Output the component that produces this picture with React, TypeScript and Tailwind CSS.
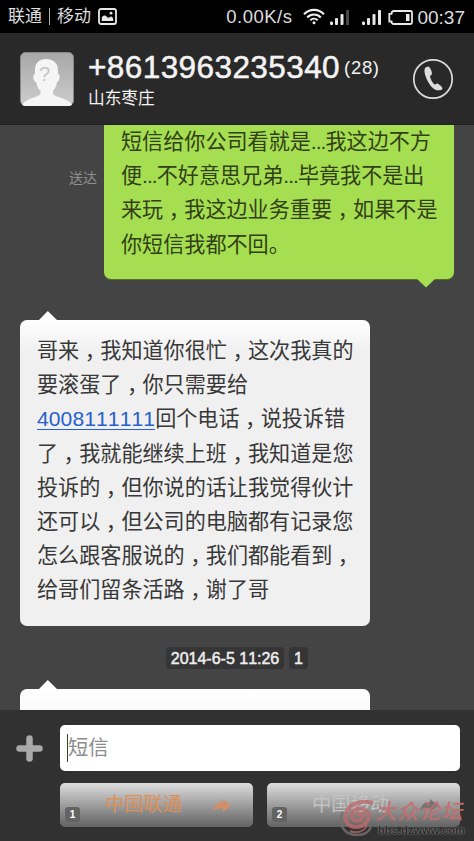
import { Fragment } from 'react';

const received = [
  '哥来，我知道你很忙，这次我真的',
  '要滚蛋了，你只需要给',
  '4008111111回个电话，说投诉错',
  '了，我就能继续上班，我知道是您',
  '投诉的，但你说的话让我觉得伙计',
  '还可以，但公司的电脑都有记录您',
  '怎么跟客服说的，我们都能看到，',
  '给哥们留条活路，谢了哥',
];

const sent = [
  '短信给你公司看就是...我这边不方',
  '便...不好意思兄弟...毕竟我不是出',
  '来玩，我这边业务重要，如果不是',
  '你短信我都不回。',
];

// commas sit in the middle of their cell, dots are set tight, numbers are links
function Line({ text }: { text: string }) {
  return (
    <p className="h-[34.2px] leading-[34.2px] whitespace-nowrap">
      {text.split(/(，|\.\.\.|\d{10})/).map((part, i) => {
        if (part === '，')
          return (
            <span key={i} lang="zh-TW" className="relative top-[7px] font-['Noto_Sans_CJK_TC',sans-serif] leading-none">
              {part}
            </span>
          );
        if (part === '...') return <span key={i} className="tracking-[-1px]">{part}</span>;
        if (/^\d{10}$/.test(part))
          return (
            <a key={i} className="text-[#2660cd] underline decoration-1 underline-offset-[3px] tracking-[0.08px] [font-kerning:none]">
              {part}
            </a>
          );
        return <Fragment key={i}>{part}</Fragment>;
      })}
    </p>
  );
}

function TailUp() {
  return (
    <svg className="absolute -top-[9px] left-[18px]" width="20" height="10" viewBox="0 0 20 10">
      <path d="M0 10 L9.8 0 L20 10Z" fill="#fff" />
    </svg>
  );
}

function StatusBar() {
  return (
    <div className="flex h-[33px] shrink-0 items-center bg-black pl-2 pr-[9px] text-[#dedede]">
      <span className="text-[17px] leading-none">联通</span>
      <span className="mx-[7px] h-[17px] w-px bg-[#b5b5b5]" />
      <span className="text-[17px] leading-none">移动</span>
      <svg className="ml-[7px]" width="19" height="17" viewBox="0 0 19 17">
        <rect x="1" y="1" width="17" height="15" rx="2" fill="none" stroke="#e8e8e8" strokeWidth="1.8" />
        <path d="M3.8 13V9.5C5.5 7 7.5 7 9 9C10.5 11 12 8.5 13 8.5C14.2 8.5 15.2 10 15.2 11V13Z" fill="#e8e8e8" />
        <circle cx="13" cy="5.2" r="1.4" fill="#e8e8e8" />
      </svg>
      <span className="mt-px ml-auto text-[18.5px] leading-none tracking-[0.5px]">0.00K/s</span>
      <svg className="ml-[11px]" width="22" height="17" viewBox="0 0 22 17" fill="none" stroke="#eee" strokeWidth="2.1">
        <path d="M1 6.2C6.5.4 15.5.4 21 6.2" />
        <path d="M4.2 9.4C8 5.5 14 5.5 17.8 9.4" />
        <path d="M7.4 12.2C9.5 10.2 12.5 10.2 14.6 12.2" />
        <circle cx="11" cy="14.8" r="1.5" fill="#eee" stroke="none" />
      </svg>
      <svg className="mt-px ml-[5px]" width="19" height="16" viewBox="0 0 19 16" fill="#e8e8e8">
        <rect y="12.5" width="3" height="3.5" rx="1" />
        <rect x="5" y="9" width="3" height="7" rx="1" />
        <rect x="10.5" y="5" width="3" height="11" rx="1" />
        <rect x="16" y="1" width="3" height="15" fill="#484848" />
      </svg>
      <svg className="mt-px ml-[13px]" width="19" height="16" viewBox="0 0 19 16" fill="#e8e8e8">
        <rect y="12.5" width="3" height="3.5" rx="1" />
        <rect x="5" y="9" width="3" height="7" rx="1" />
        <rect x="10.5" y="5" width="3" height="11" rx="1" />
        <rect x="16" y="1" width="3" height="15" rx="1" />
      </svg>
      <svg className="mt-[2px] ml-[7px]" width="25" height="15" viewBox="0 0 25 15">
        <path d="M6 1H22.5Q24 1 24 2.5V12.5Q24 14 22.5 14H6Q3.5 14 3.5 11.5H1.3V3.8H3.5Q3.5 1 6 1Z" fill="none" stroke="#e8e8e8" strokeWidth="1.8" />
        <rect x="18" y="4" width="3.5" height="7" fill="#e8e8e8" />
      </svg>
      <span className="mt-[2px] ml-[4px] text-[19px] leading-none">00:37</span>
    </div>
  );
}

function Header() {
  return (
    <header className="flex h-[92px] shrink-0 items-start border-b border-[#202020] bg-[#292929] pl-5 pr-[20px]">
      <svg className="mt-[19px]" width="54" height="54" viewBox="0 0 54 54">
        <defs>
          <linearGradient id="avatar" x1="0" y1="0" x2="0" y2="1">
            <stop offset="0" stopColor="#a7a7a7" />
            <stop offset="1" stopColor="#cdcdcd" />
          </linearGradient>
          <clipPath id="frame">
            <rect width="54" height="54" rx="5" />
          </clipPath>
        </defs>
        <rect x=".5" y=".5" width="53" height="53" rx="5" fill="url(#avatar)" stroke="#888" />
        <g clipPath="url(#frame)" fill="#f5f5f5">
          <path d="M15 18C15 10.5 19.5 7 26 7C33 7 38 11 38 18V22C41 22 39.5 30 37 30C36.5 34 35 37 33 39V42C36 46 49 46 53 54H1C6 46 18 45.5 20.5 42V39C18 37 17 34 16 30C13.5 30 12 22 15 22Z" />
        </g>
        <text x="19" y="29" fontSize="20" fill="#c4c4c4">?</text>
      </svg>
      <div className="ml-[14px] mt-[16px] text-[#f4f4f4]">
        <div className="flex h-[38px] items-center whitespace-nowrap">
          <span className="text-[31.5px] leading-none tracking-[0.42px] [-webkit-text-stroke:0.5px_#f4f4f4]">+8613963235340</span>
          <span className="ml-[4px] text-[18.5px] leading-none tracking-[0.7px]">(28)</span>
        </div>
        <div className="text-[16.7px] leading-[24px]">山东枣庄</div>
      </div>
      <svg className="ml-auto mt-[25px]" width="42" height="42" viewBox="0 0 42 42">
        <circle cx="21" cy="21" r="19.2" fill="none" stroke="#dcdcdc" strokeWidth="1.7" />
        <path d="M14.5 9C12 10 12.2 13 13.2 17C15 23 18.5 29 23 31.5C26 33 30 32.5 30.5 30.5C30.5 29 27.5 26.5 25.5 25.5C24 25.3 23.5 26.8 22.5 26.5C20.5 25 18.5 21 18 18.5C18 17.5 20 17 20 15.5C19.8 13 18 9.5 16.5 8.6Z" fill="#dedede" />
      </svg>
    </header>
  );
}

function SimButton({ slot, name, labelClass, arrowClass }: { slot: string; name: string; labelClass: string; arrowClass: string }) {
  return (
    <button className="relative flex h-[44px] flex-1 items-center justify-end rounded-[5px] bg-gradient-to-b from-[#dedede] to-[#636363] pr-[22px]">
      <span className="absolute bottom-[5px] left-[5px] flex h-[15px] w-[15px] items-center justify-center rounded-[3px] bg-[#636363] text-[10px] leading-none font-bold text-white">
        {slot}
      </span>
      <span className={labelClass}>{name}</span>
      <svg className={arrowClass} width="18" height="13" viewBox="0 0 18 13" fill="currentColor">
        <path d="M0 12C1 6 5 3 10 3V0L18 6.5L10 13V9.5C6 9 3 10 0 12Z" />
      </svg>
    </button>
  );
}

function Watermark() {
  return (
    <div className="absolute bottom-0 left-[338px] h-[42px] w-[136px] whitespace-nowrap">
      <svg className="absolute top-[1px] left-0 opacity-80" width="37" height="38" viewBox="0 0 37 38" fill="none">
        <path d="M5 12C-1 24 6 35 19 35C26 35 31 32 33 27" stroke="#777070" strokeWidth="2.5" />
        <path d="M35 3C25 0 10 3 8 14C6 23 12 28 20 27C30 25 34 15 27 10C22 6 14 10 14 16C14 21 21 23 24 18C26 15 22 12 19 15" stroke="#bd6c6c" strokeWidth="4" />
        <path d="M12 31C19 34 27 31 29 25" stroke="#a66" strokeWidth="2" />
      </svg>
      <span className="absolute top-0 left-[39px] -skew-x-12 text-[21px] leading-[26px] font-medium tracking-[1px] text-[#c56f6f] opacity-90">
        大众论坛
      </span>
      <span className="absolute top-[25px] left-[40px] text-[10.5px] leading-[13px] font-bold tracking-[0.4px] text-[#242424] [text-shadow:0_0_1px_#999,0_0_2px_#888]">
        bbs.dzwww.com
      </span>
    </div>
  );
}

export default function App() {
  return (
    <div
      lang="zh-CN"
      className="relative flex h-[841px] w-[474px] flex-col overflow-hidden bg-[#444] font-['Liberation_Sans','Noto_Sans_CJK_SC',sans-serif]"
    >
      <StatusBar />
      <Header />
      <main className="flex min-h-0 flex-1 flex-col overflow-hidden text-[21.1px] text-[#383838]">
        <div className="flex shrink-0 justify-end pr-[20px]">
          <span className="mt-[41px] mr-[7px] text-[14px] leading-[24px] text-[#8f8f8f]">送达</span>
          <div className="relative h-[154px] w-[350px] rounded-b-[7px] bg-[#a5de50] pl-[17px] text-[#324018] shadow-[0_1px_0_#536f28]">
            {sent.map((line) => (
              <Line key={line} text={line} />
            ))}
            <svg className="absolute right-[18px] -bottom-[9px]" width="20" height="10" viewBox="0 0 20 10">
              <path d="M0 0H20L10 9.5Z" fill="#a5de50" />
            </svg>
          </div>
        </div>

        <div className="relative mt-[41px] ml-5 h-[306px] w-[350px] shrink-0 rounded-[7px] bg-[#f0f0f0] bg-gradient-to-b from-white via-[#f0f0f0] via-10% to-[#f0f0f0] pt-[14px] pl-[17px]">
          <TailUp />
          {received.map((line) => (
            <Line key={line} text={line} />
          ))}
        </div>

        <div className="mt-[21px] flex shrink-0 justify-center gap-[5px] text-[16px] leading-[23px] text-[#ededed] [font-kerning:none] [-webkit-text-stroke:0.5px_#ededed]">
          <span className="h-[22px] w-[118px] rounded-[4px] bg-[#353535] text-center whitespace-nowrap">
            2014-6-5 11:26
          </span>
          <span className="h-[22px] w-[19px] rounded-[4px] bg-[#353535] text-center">1</span>
        </div>

        <div className="relative mt-[20px] ml-5 h-[60px] w-[350px] shrink-0 rounded-t-[7px] bg-gradient-to-b from-white to-[#f0f0f0]">
          <TailUp />
        </div>
      </main>

      <footer className="flex h-[131px] shrink-0 bg-[#313131] pt-[15px] pr-[14px] pl-4">
        <svg className="mt-[10px] mr-[17px] shrink-0" width="27" height="27" viewBox="0 0 27 27">
          <path d="M13.5 3.5V23.5M3.5 13.5H23.5" stroke="#a9a9a9" strokeWidth="6.5" strokeLinecap="round" />
        </svg>
        <div className="flex-1">
          <div className="flex h-[46px] items-center rounded-[5px] bg-white pl-[7px]">
            <span className="h-[28px] w-px bg-[#2f4a1c]" />
            <span className="text-[20.3px] leading-none text-[#8c8c8c]">短信</span>
          </div>
          <div className="mt-[12px] flex gap-[14px]">
            <SimButton
              slot="1"
              name="中国联通"
              labelClass="text-[19.3px] leading-none text-[#dc9058] mr-[31px]"
              arrowClass="text-[#d08f68]"
            />
            <SimButton
              slot="2"
              name="中国移动"
              labelClass="text-[19.3px] leading-none text-[#c3c3c3] mr-[31px]"
              arrowClass="text-[#747474]"
            />
          </div>
        </div>
      </footer>
      <Watermark />
    </div>
  );
}
